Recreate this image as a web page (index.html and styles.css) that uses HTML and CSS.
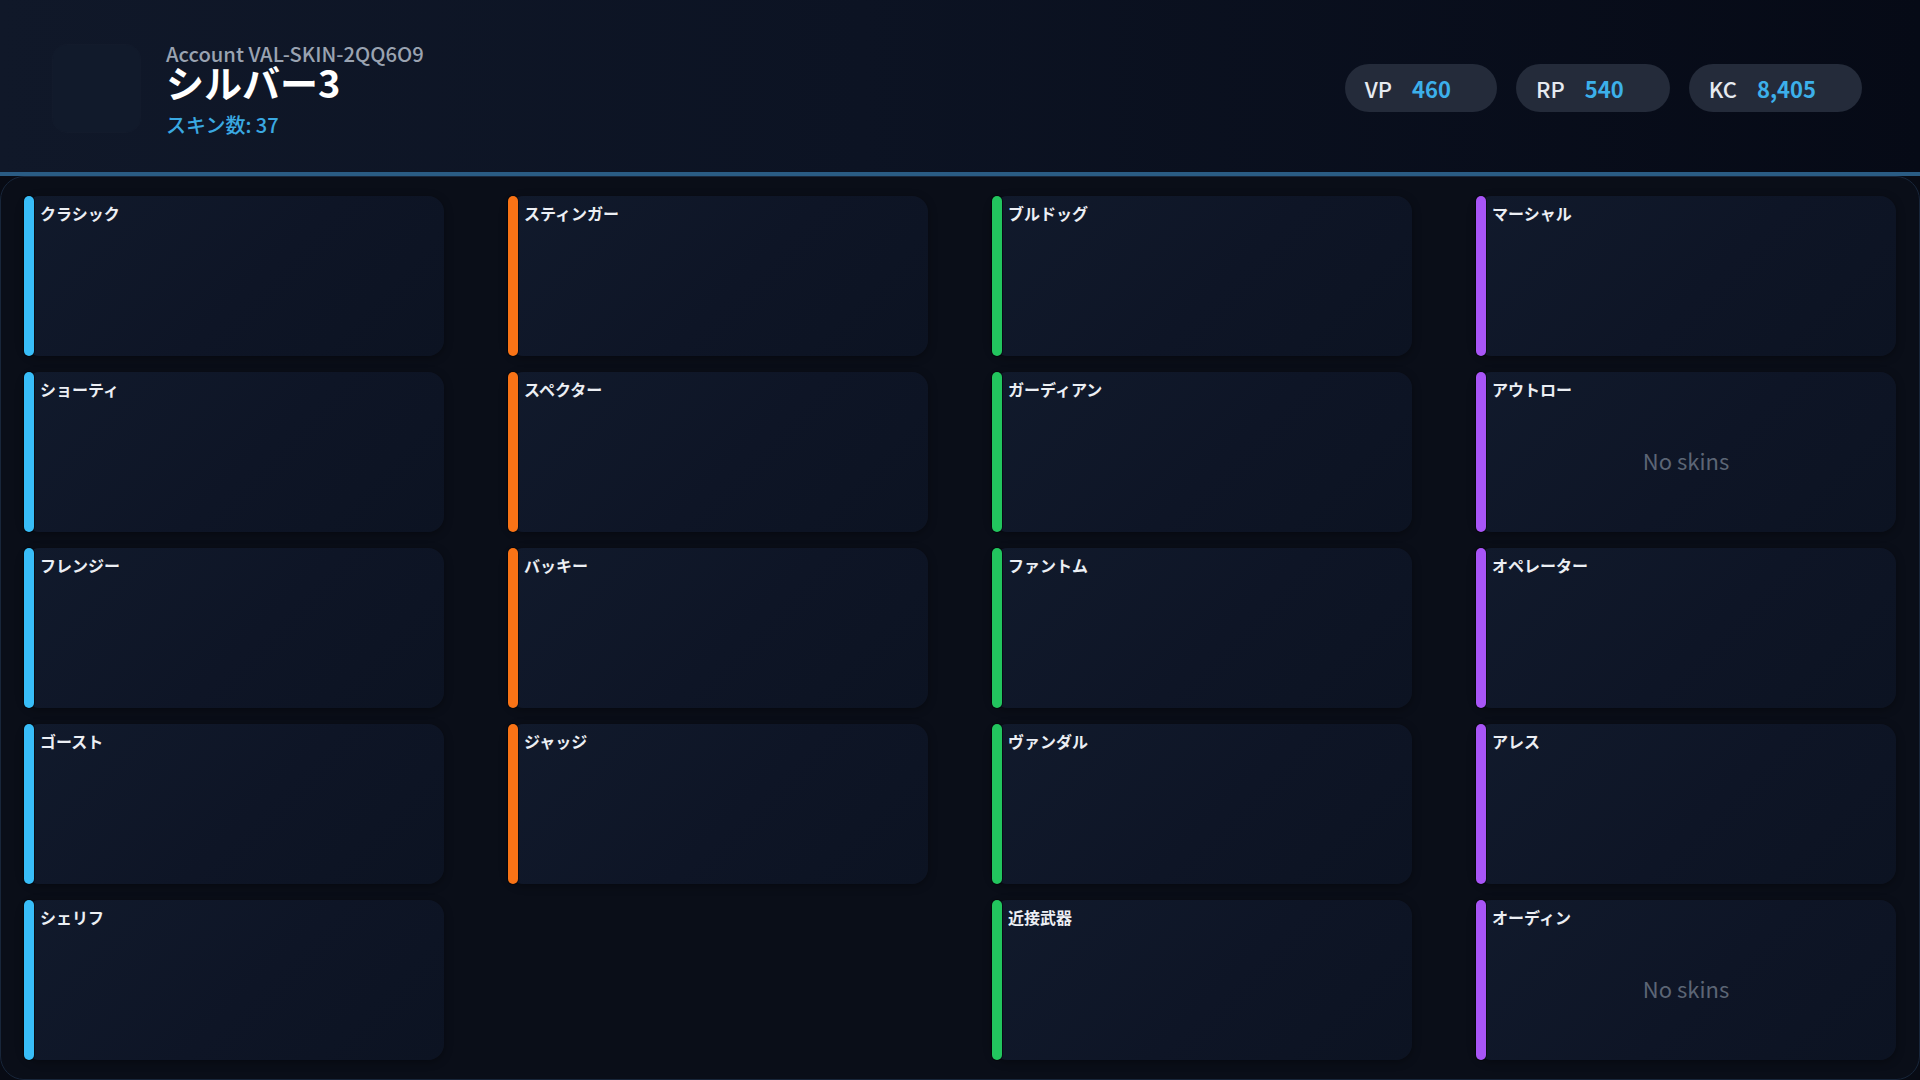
FILE: index.html
```html
<!DOCTYPE html>
<html lang="ja">
<head>
<meta charset="utf-8">
<title>Account VAL-SKIN-2QQ6O9</title>
<link rel="stylesheet" href="styles.css">
</head>
<body>
<div class="app">
  <header class="header">
    <div class="profile">
      <div class="avatar"></div>
      <div class="profile-text">
        <div class="account">Account VAL-SKIN-2QQ6O9</div>
        <div class="rank">シルバー3</div>
        <div class="skin-count">スキン数: 37</div>
      </div>
    </div>
    <div class="currencies">
      <div class="pill"><span class="pill-label">VP</span><span class="pill-value">460</span></div>
      <div class="pill"><span class="pill-label">RP</span><span class="pill-value">540</span></div>
      <div class="pill"><span class="pill-label">KC</span><span class="pill-value">8,405</span></div>
    </div>
  </header>

  <main class="panel">
    <div class="grid">
      <div class="column sidearm">
        <div class="card"><div class="bar"></div><div class="card-title">クラシック</div></div>
        <div class="card"><div class="bar"></div><div class="card-title">ショーティ</div></div>
        <div class="card"><div class="bar"></div><div class="card-title">フレンジー</div></div>
        <div class="card"><div class="bar"></div><div class="card-title">ゴースト</div></div>
        <div class="card"><div class="bar"></div><div class="card-title">シェリフ</div></div>
      </div>
      <div class="column smg">
        <div class="card"><div class="bar"></div><div class="card-title">スティンガー</div></div>
        <div class="card"><div class="bar"></div><div class="card-title">スペクター</div></div>
        <div class="card"><div class="bar"></div><div class="card-title">バッキー</div></div>
        <div class="card"><div class="bar"></div><div class="card-title">ジャッジ</div></div>
      </div>
      <div class="column rifle">
        <div class="card"><div class="bar"></div><div class="card-title">ブルドッグ</div></div>
        <div class="card"><div class="bar"></div><div class="card-title">ガーディアン</div></div>
        <div class="card"><div class="bar"></div><div class="card-title">ファントム</div></div>
        <div class="card"><div class="bar"></div><div class="card-title">ヴァンダル</div></div>
        <div class="card"><div class="bar"></div><div class="card-title">近接武器</div></div>
      </div>
      <div class="column heavy">
        <div class="card"><div class="bar"></div><div class="card-title">マーシャル</div></div>
        <div class="card"><div class="bar"></div><div class="card-title">アウトロー</div><div class="empty">No skins</div></div>
        <div class="card"><div class="bar"></div><div class="card-title">オペレーター</div></div>
        <div class="card"><div class="bar"></div><div class="card-title">アレス</div></div>
        <div class="card"><div class="bar"></div><div class="card-title">オーディン</div><div class="empty">No skins</div></div>
      </div>
    </div>
  </main>
</div>
</body>
</html>
```

FILE: styles.css
```css
* {
  box-sizing: border-box;
}

html, body {
  margin: 0;
  padding: 0;
}

body {
  width: 1920px;
  height: 1080px;
  overflow: hidden;
  background: #080b14;
  font-family: "Noto Sans CJK JP", "Noto Sans", sans-serif;
  color: #e5e7eb;
}

.app {
  display: flex;
  flex-direction: column;
  height: 1080px;
}

/* ---------- header ---------- */
.header {
  height: 176px;
  flex: none;
  display: flex;
  align-items: center;
  justify-content: space-between;
  padding: 4px 58px 0 53px;
  background: linear-gradient(90deg, #101829 0%, #0c1323 45%, #060a16 100%);
  border-bottom: 4px solid #2a5c84;
}

.profile {
  display: flex;
  align-items: center;
  gap: 26px;
}

.avatar {
  width: 87px;
  height: 87px;
  border-radius: 14px;
  background: #111a2b;
  box-shadow: 0 0 0 1px rgba(255, 255, 255, 0.015);
}

.profile-text {
  display: flex;
  flex-direction: column;
  padding-top: 2px;
}

.account {
  font-size: 20.2px;
  line-height: 26px;
  font-weight: 500;
  color: #9aa3b1;
}

.rank {
  font-size: 38px;
  line-height: 34px;
  font-weight: 700;
  color: #ffffff;
  margin-top: -2px;
}

.skin-count {
  font-size: 20px;
  line-height: 26px;
  font-weight: 500;
  color: #3aa9e2;
  margin-top: 13px;
}

.currencies {
  display: flex;
  gap: 19px;
}

.pill {
  height: 48px;
  display: flex;
  align-items: center;
  gap: 20px;
  padding: 0 46px 0 20px;
  border-radius: 24px;
  background: #242b3a;
  font-size: 22px;
}

.pill-label {
  color: #e6eaf0;
  font-weight: 500;
}

.pill-value {
  color: #3cb0ea;
  font-weight: 600;
}

/* ---------- panel ---------- */
.panel {
  flex: 1;
  border: 1px solid #18263a;
  border-radius: 24px;
  background: #0a0e18;
  padding: 19px 23px;
}

.grid {
  display: grid;
  grid-template-columns: repeat(4, 1fr);
  column-gap: 64px;
  height: 100%;
}

.column {
  display: flex;
  flex-direction: column;
  gap: 16px;
}

.card {
  position: relative;
  height: 160px;
  display: flex;
  flex-direction: column;
  padding: 5px 6px 0 16px;
  border-radius: 16px;
  background: linear-gradient(135deg, #111a2c 0%, #0e1526 55%, #0c1322 100%);
  box-shadow: 0 2px 8px rgba(0, 0, 0, 0.35);
}

.bar {
  position: absolute;
  left: 0;
  top: 0;
  bottom: 0;
  width: 10px;
  border-radius: 5px;
  box-shadow: 0 0 0 1px rgba(0, 0, 0, 0.45);
}

.sidearm .bar { background: #38bdf8; }
.smg .bar { background: #f97316; }
.rifle .bar { background: #22c55e; }
.heavy .bar { background: #a855f7; }

.card-title {
  font-size: 16px;
  line-height: 24px;
  font-weight: 700;
  color: #eceff4;
}

.empty {
  flex: 1;
  display: flex;
  align-items: center;
  justify-content: center;
  margin-left: -10px;
  padding-bottom: 14px;
  font-size: 22px;
  color: #5c6575;
}
```
